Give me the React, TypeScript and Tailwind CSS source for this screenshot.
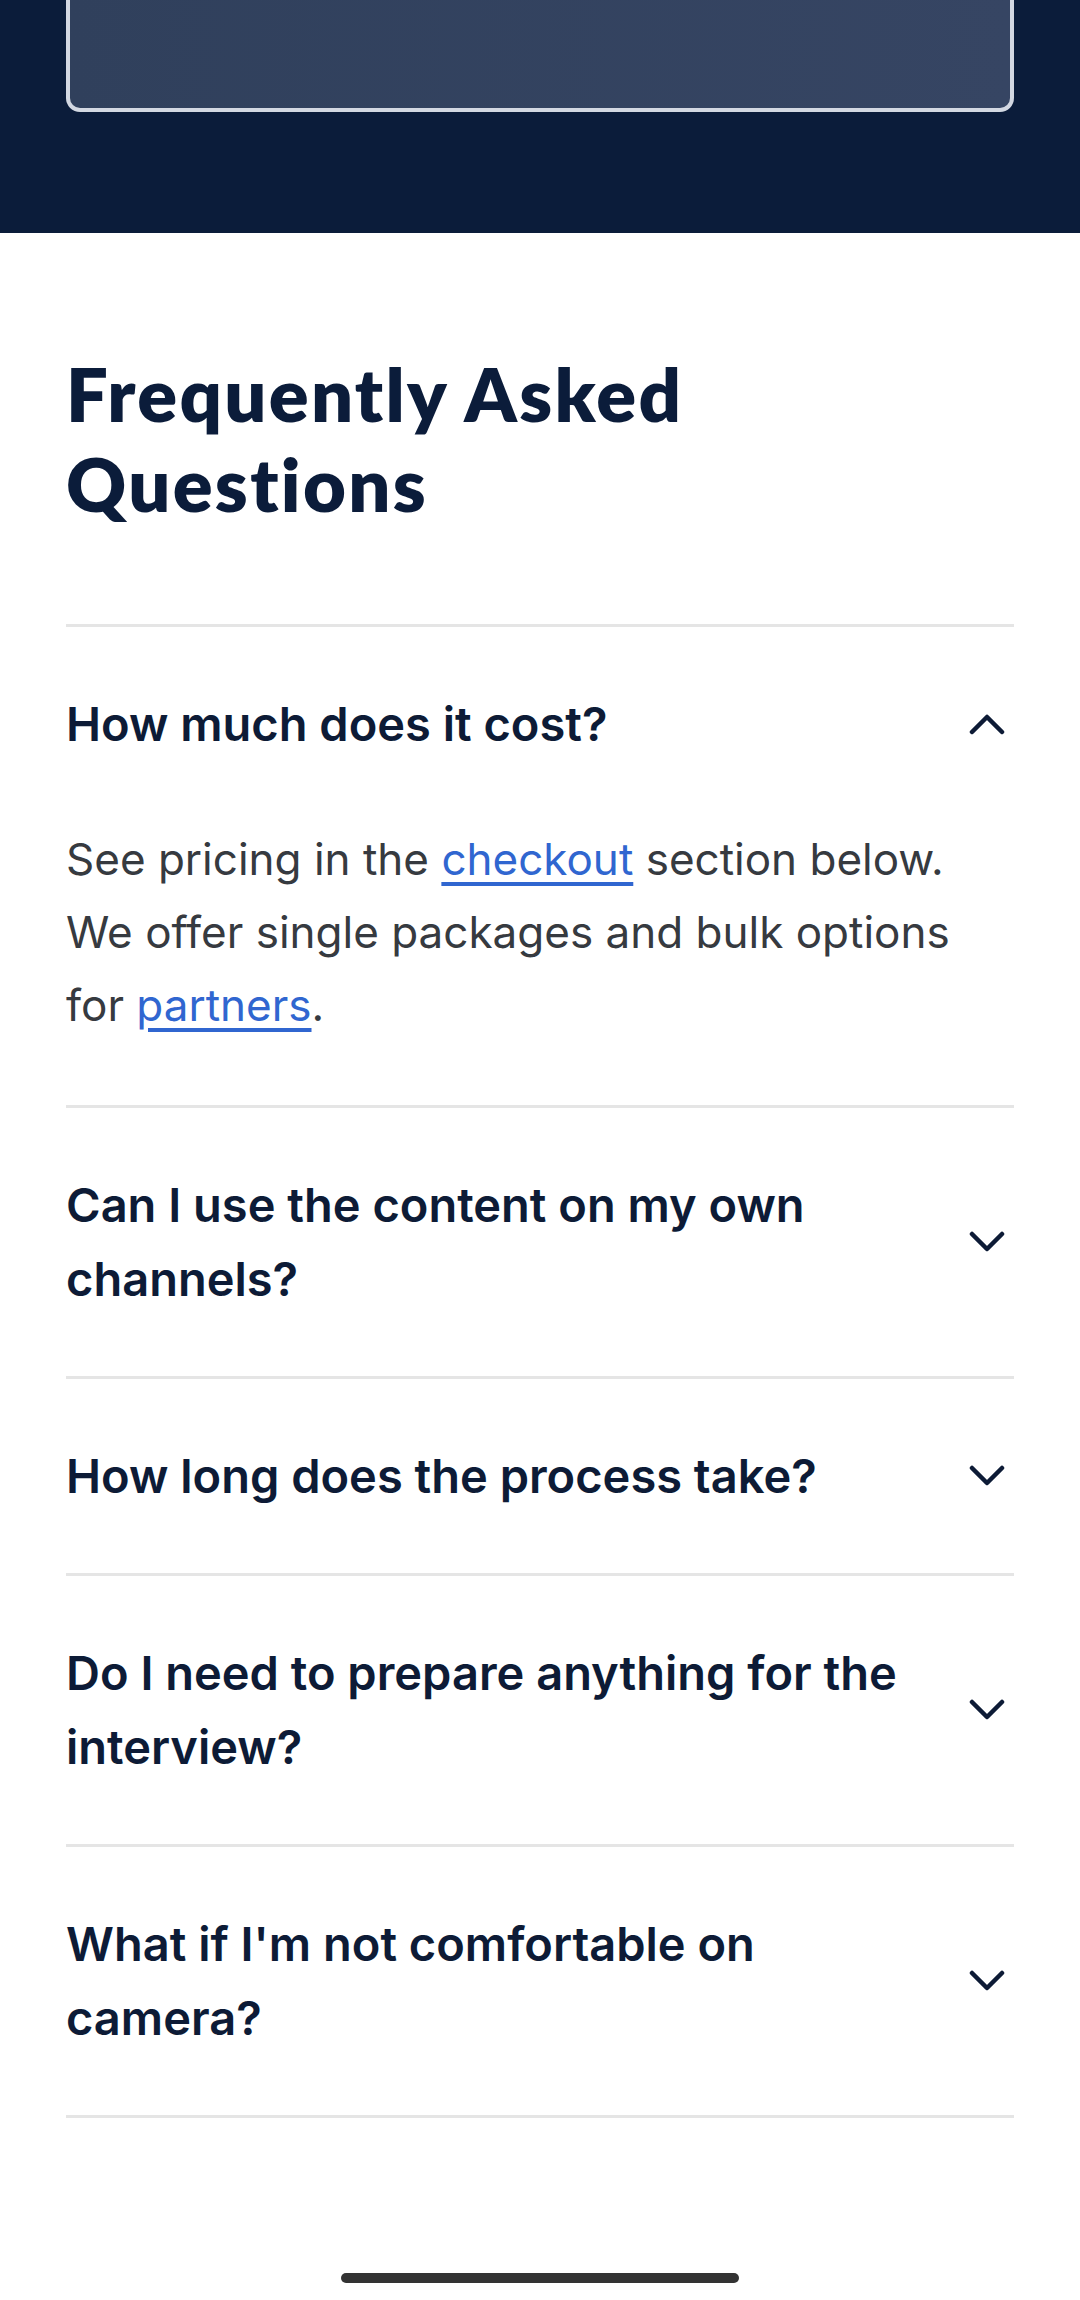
import { useState } from "react";

type Faq = {
  q: string;
  a?: React.ReactNode;
};

const FAQS: Faq[] = [
  {
    q: "How much does it cost?",
    a: (
      <>
        See pricing in the{" "}
        <a href="#checkout" className="text-[#3066d0] underline decoration-[4px] underline-offset-[7px]">
          checkout
        </a>{" "}
        section below. We offer single packages and bulk options for{" "}
        <a href="#partners" className="text-[#3066d0] underline decoration-[4px] underline-offset-[7px]">
          partners
        </a>
        .
      </>
    ),
  },
  { q: "Can I use the content on my own channels?" },
  { q: "How long does the process take?" },
  { q: "Do I need to prepare anything for the interview?" },
  { q: "What if I'm not comfortable on camera?" },
];

function Chevron({ up }: { up: boolean }) {
  return (
    <svg
      width="36"
      height="22"
      viewBox="0 0 36 22"
      fill="none"
      stroke="#0d1b36"
      strokeWidth="4.5"
      strokeLinecap="round"
      strokeLinejoin="round"
      className="shrink-0 mr-[9px]"
    >
      {up ? <polyline points="3,19 18,4 33,19" /> : <polyline points="3,3 18,18 33,3" />}
    </svg>
  );
}

export default function App() {
  // only the first question starts open, like the screenshot
  const [open, setOpen] = useState<number | null>(0);

  return (
    <div className="relative min-h-[2300px] bg-white" style={{ fontFamily: "Inter, 'Noto Sans', sans-serif" }}>
      {/* dark band with the bottom of the previous card */}
      <div className="h-[233px] bg-[#0b1c3a] px-[66px]">
        <div className="h-[112px] rounded-b-[14px] border-x-4 border-b-4 border-[#d3d8e2] bg-gradient-to-r from-[#30405c] to-[#364563]" />
      </div>

      <section className="px-[66px]">
        <h2
          className="mt-[116px] text-[74px] leading-[90px] font-extrabold text-[#0b1c3a] tracking-[2.3px]"
          style={{ fontFamily: "Lato, 'Noto Sans', sans-serif" }}
        >
          Frequently Asked
          <br />
          Questions
        </h2>

        <div className="mt-[95px] border-b-[3px] border-[#e5e5e5]">
          {FAQS.map((item, i) => {
            const isOpen = open === i;
            return (
              <div key={item.q} className="border-t-[3px] border-[#e5e5e5]">
                <button
                  type="button"
                  onClick={() => setOpen(isOpen ? null : i)}
                  className="flex w-full items-center justify-between gap-6 py-[60px] text-left"
                >
                  <span className="pr-[20px] text-[47px] leading-[74px] font-semibold text-[#0d1b36]">
                    {item.q}
                  </span>
                  <Chevron up={isOpen} />
                </button>
                {isOpen && item.a && (
                  <p className="mt-[2px] pb-[63px] pr-[20px] text-[44px] leading-[73px] text-[#363a40]">
                    {item.a}
                  </p>
                )}
              </div>
            );
          })}
        </div>
      </section>

      {/* phone home indicator */}
      <div className="absolute bottom-[17px] left-[341px] h-[10px] w-[398px] rounded-full bg-[#333333]" />
    </div>
  );
}
